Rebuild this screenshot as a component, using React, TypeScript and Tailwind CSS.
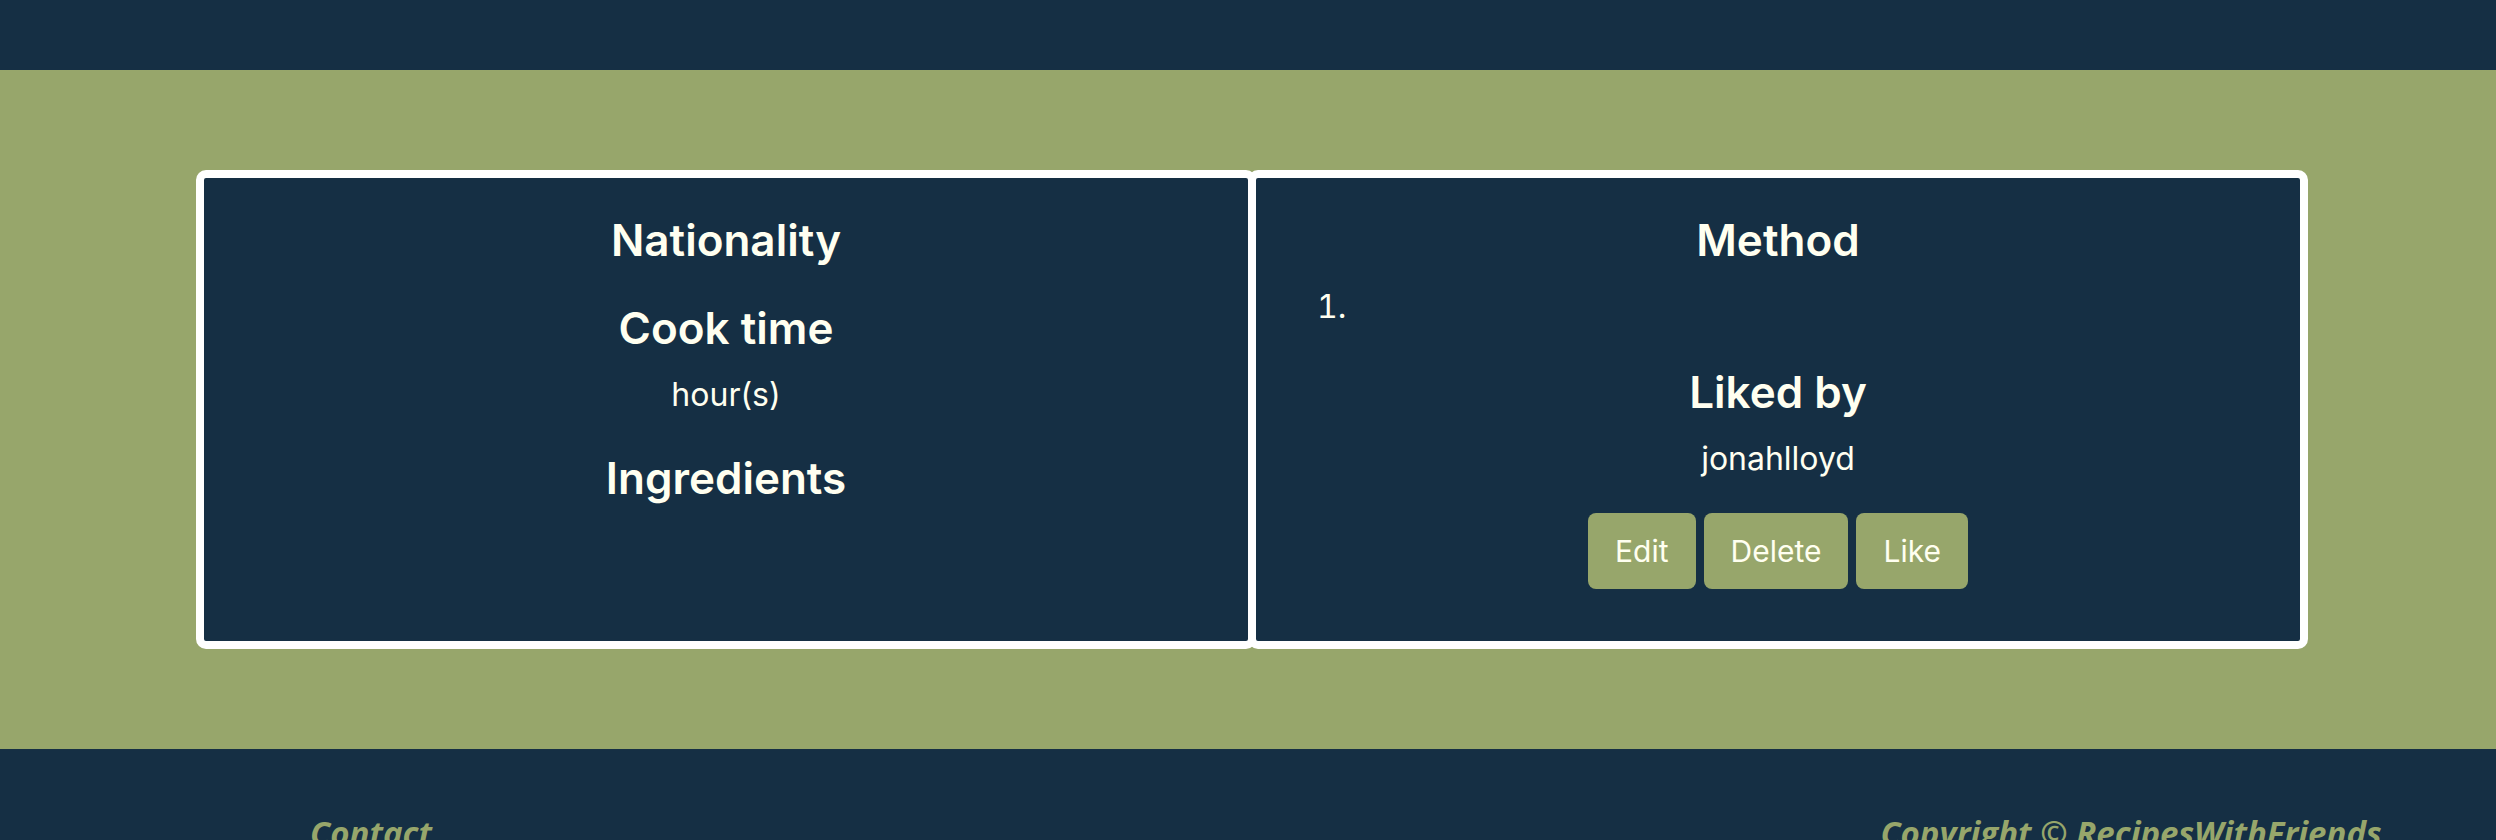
import React from 'react';

const Heading: React.FC<{ children: React.ReactNode; className?: string }> = ({ children, className = '' }) => (
  <h2 className={`text-[44px] leading-[53px] font-semibold ${className}`}>{children}</h2>
);

const RecipeDetails: React.FC = () => (
  <section className="w-[1060px] rounded-[10px] border-8 border-white bg-[#152f44] pt-[36px] text-center">
    <Heading>Nationality</Heading>
    <Heading className="mt-[35px]">Cook time</Heading>
    <p className="mt-[20px] text-[32px] leading-[39px]">hour(s)</p>
    <Heading className="mt-[38px]">Ingredients</Heading>
  </section>
);

const RecipeMethod: React.FC = () => (
  <section className="-ml-2 w-[1060px] rounded-[10px] border-8 border-white bg-[#152f44] pt-[36px] pb-[52px] text-center">
    <Heading>Method</Heading>
    <ol className="mt-[20px] list-inside list-decimal pl-[61px] text-left text-[32px] leading-[39px]">
      <li></li>
    </ol>
    <Heading className="mt-[40px]">Liked by</Heading>
    <p className="mt-[20px] text-[32px] leading-[39px]">jonahlloyd</p>
    <div className="mt-[35px] flex justify-center gap-2">
      {['Edit', 'Delete', 'Like'].map((label) => (
        <button
          key={label}
          className="h-[76px] rounded-[8px] bg-[#97a66b] px-[27px] text-[30px] text-[#fffff0]"
        >
          {label}
        </button>
      ))}
    </div>
  </section>
);

const Footer: React.FC = () => (
  <footer className="flex justify-between bg-[#152f44] pt-[59px] pb-[80px] pl-[65px] pr-[59px] font-['Open_Sans',sans-serif] text-[33px] leading-normal font-bold italic text-[#97a66b]">
    <div className="w-[612px] text-center">Contact</div>
    <div className="w-[612px] text-center">Copyright © RecipesWithFriends</div>
  </footer>
);

export default function App() {
  return (
    <div className="min-h-screen bg-[#152f44] font-['Inter',sans-serif] text-[#fffff0]">
      <header className="h-[70px] bg-[#152f44]"></header>
      <main className="flex justify-center bg-[#97a66b] py-[100px] pl-2">
        <RecipeDetails />
        <RecipeMethod />
      </main>
      <Footer />
    </div>
  );
}
